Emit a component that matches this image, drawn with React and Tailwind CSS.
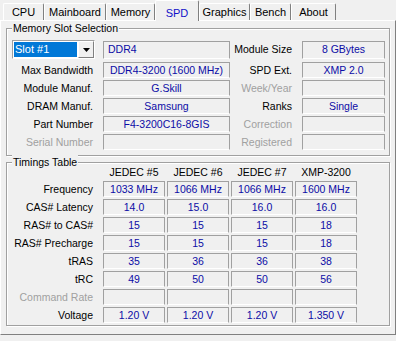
import React from 'react';

const tabs = [
  { name: 'CPU', w: 'w-[41px]' },
  { name: 'Mainboard', w: 'w-[62px]' },
  { name: 'Memory', w: 'w-[49px]' },
  { name: 'SPD', w: 'w-[44px]', active: true },
  { name: 'Graphics', w: 'w-[51px]' },
  { name: 'Bench', w: 'w-[41px]' },
  { name: 'About', w: 'w-[45px]' },
];

const Field = ({ children, className = '' }) => (
  <div className={`h-[16px] flex items-center justify-center border border-[#a0a0a0] border-b-white text-[#0c0ca6] leading-none whitespace-nowrap ${className}`}>
    {children}
  </div>
);

const Label = ({ children, dim, className = '' }) => (
  <div className={`h-[16px] flex items-center justify-end whitespace-nowrap leading-none ${dim ? 'text-[#a0a0a0]' : 'text-black'} ${className}`}>
    {children}
  </div>
);

const Group = ({ title, className = '', children }) => (
  <div className={`relative border border-[#a0a0a0] shadow-[inset_1px_1px_0_#fff,1px_1px_0_#fff] ${className}`}>
    <span className="absolute left-[5px] top-[-8px] px-[1px] bg-[#f0f0f0] leading-[14px] text-black">{title}</span>
    {children}
  </div>
);

const slotRows = [
  ['Max Bandwidth', 'DDR4-3200 (1600 MHz)', false, 'SPD Ext.', 'XMP 2.0', false],
  ['Module Manuf.', 'G.Skill', false, 'Week/Year', '', true],
  ['DRAM Manuf.', 'Samsung', false, 'Ranks', 'Single', false],
  ['Part Number', 'F4-3200C16-8GIS', false, 'Correction', '', true],
  ['Serial Number', '', true, 'Registered', '', true],
];

const timingCols = ['JEDEC #5', 'JEDEC #6', 'JEDEC #7', 'XMP-3200'];

const timingRows = [
  ['Frequency', ['1033 MHz', '1066 MHz', '1066 MHz', '1600 MHz']],
  ['CAS# Latency', ['14.0', '15.0', '16.0', '16.0']],
  ['RAS# to CAS#', ['15', '15', '15', '18']],
  ['RAS# Precharge', ['15', '15', '15', '18']],
  ['tRAS', ['35', '36', '36', '38']],
  ['tRC', ['49', '50', '50', '56']],
  ['Command Rate', ['', '', '', ''], true],
  ['Voltage', ['1.20 V', '1.20 V', '1.20 V', '1.350 V']],
];

export default function App() {
  return (
    <div className="w-[396px] h-[341px] bg-[#f0f0f0] text-[10.5px] overflow-hidden" style={{ fontFamily: '"Liberation Sans", Arial, sans-serif' }}>
      {/* tab strip */}
      <div className="h-[20px] flex items-end pl-[3px]">
        {tabs.map((t) =>
          t.active ? (
            <div
              key={t.name}
              className={`${t.w} h-[21px] -mb-[1px] relative z-10 flex items-start justify-center pt-[4px] bg-[#f0f0f0] border-t border-l border-white border-r border-r-[#808080] rounded-t-[2px] text-[#1010c8] text-[11px]`}
            >
              {t.name}
            </div>
          ) : (
            <div
              key={t.name}
              className={`${t.w} h-[17px] flex items-center justify-center pt-[1px] bg-[#f0f0f0] border-t border-l border-white border-r border-r-[#808080] rounded-t-[2px] text-black text-[11px]`}
            >
              {t.name}
            </div>
          )
        )}
      </div>

      {/* panel */}
      <div className="h-[315px] border-t border-l border-white border-r border-r-[#808080] border-b border-b-[#808080] px-[5px] pt-[7px]">
        <Group title="Memory Slot Selection" className="pl-[5px] pt-[11px] pb-[5px]">
          <div className="flex items-center h-[19px]">
            <div className="w-[83px] h-[19px] flex border border-[#a0a0a0] border-b-white border-r-white bg-white">
              <div className="flex-1 m-[1px] bg-[#0078d7] text-white text-[11px] flex items-center pl-[1px] leading-none">Slot #1</div>
              <div className="w-[16px] flex items-center justify-center bg-[#f0f0f0] border border-white border-r-[#808080] border-b-[#808080]">
                <svg width="7" height="4" viewBox="0 0 7 4"><path d="M0 0h7L3.5 4z" fill="#000" /></svg>
              </div>
            </div>
            <Field className="ml-[8px] w-[127px] h-[18px] justify-start pl-[4px]">DDR4</Field>
            <Label className="w-[62px]">Module Size</Label>
            <Field className="ml-[10px] w-[83px] h-[18px]">8 GBytes</Field>
          </div>
          <div className="mt-[3px] flex flex-col gap-[2px]">
            {slotRows.map(([l1, v1, d1, l2, v2, d2]) => (
              <div key={l1} className="flex items-center">
                <Label dim={d1} className="w-[81px]">{l1}</Label>
                <Field className="ml-[10px] w-[127px]">{v1}</Field>
                <Label dim={d2} className="w-[62px]">{l2}</Label>
                <Field className="ml-[10px] w-[83px]">{v2}</Field>
              </div>
            ))}
          </div>
        </Group>

        <Group title="Timings Table" className="mt-[6px] pl-[5px] pt-[2px] pb-[2px]">
          <div className="flex h-[16px] items-center">
            <div className="w-[91px]" />
            {timingCols.map((c) => (
              <div key={c} className="w-[62px] mr-[2px] text-center whitespace-nowrap">{c}</div>
            ))}
          </div>
          <div className="flex flex-col gap-[2px]">
            {timingRows.map(([label, vals, dim]) => (
              <div key={label} className="flex items-center">
                <Label dim={dim} className="w-[81px]">{label}</Label>
                <div className="ml-[10px] flex gap-[2px]">
                  {vals.map((v, i) => (
                    <Field key={i} className="w-[62px]">{v}</Field>
                  ))}
                </div>
              </div>
            ))}
          </div>
        </Group>
      </div>
    </div>
  );
}
